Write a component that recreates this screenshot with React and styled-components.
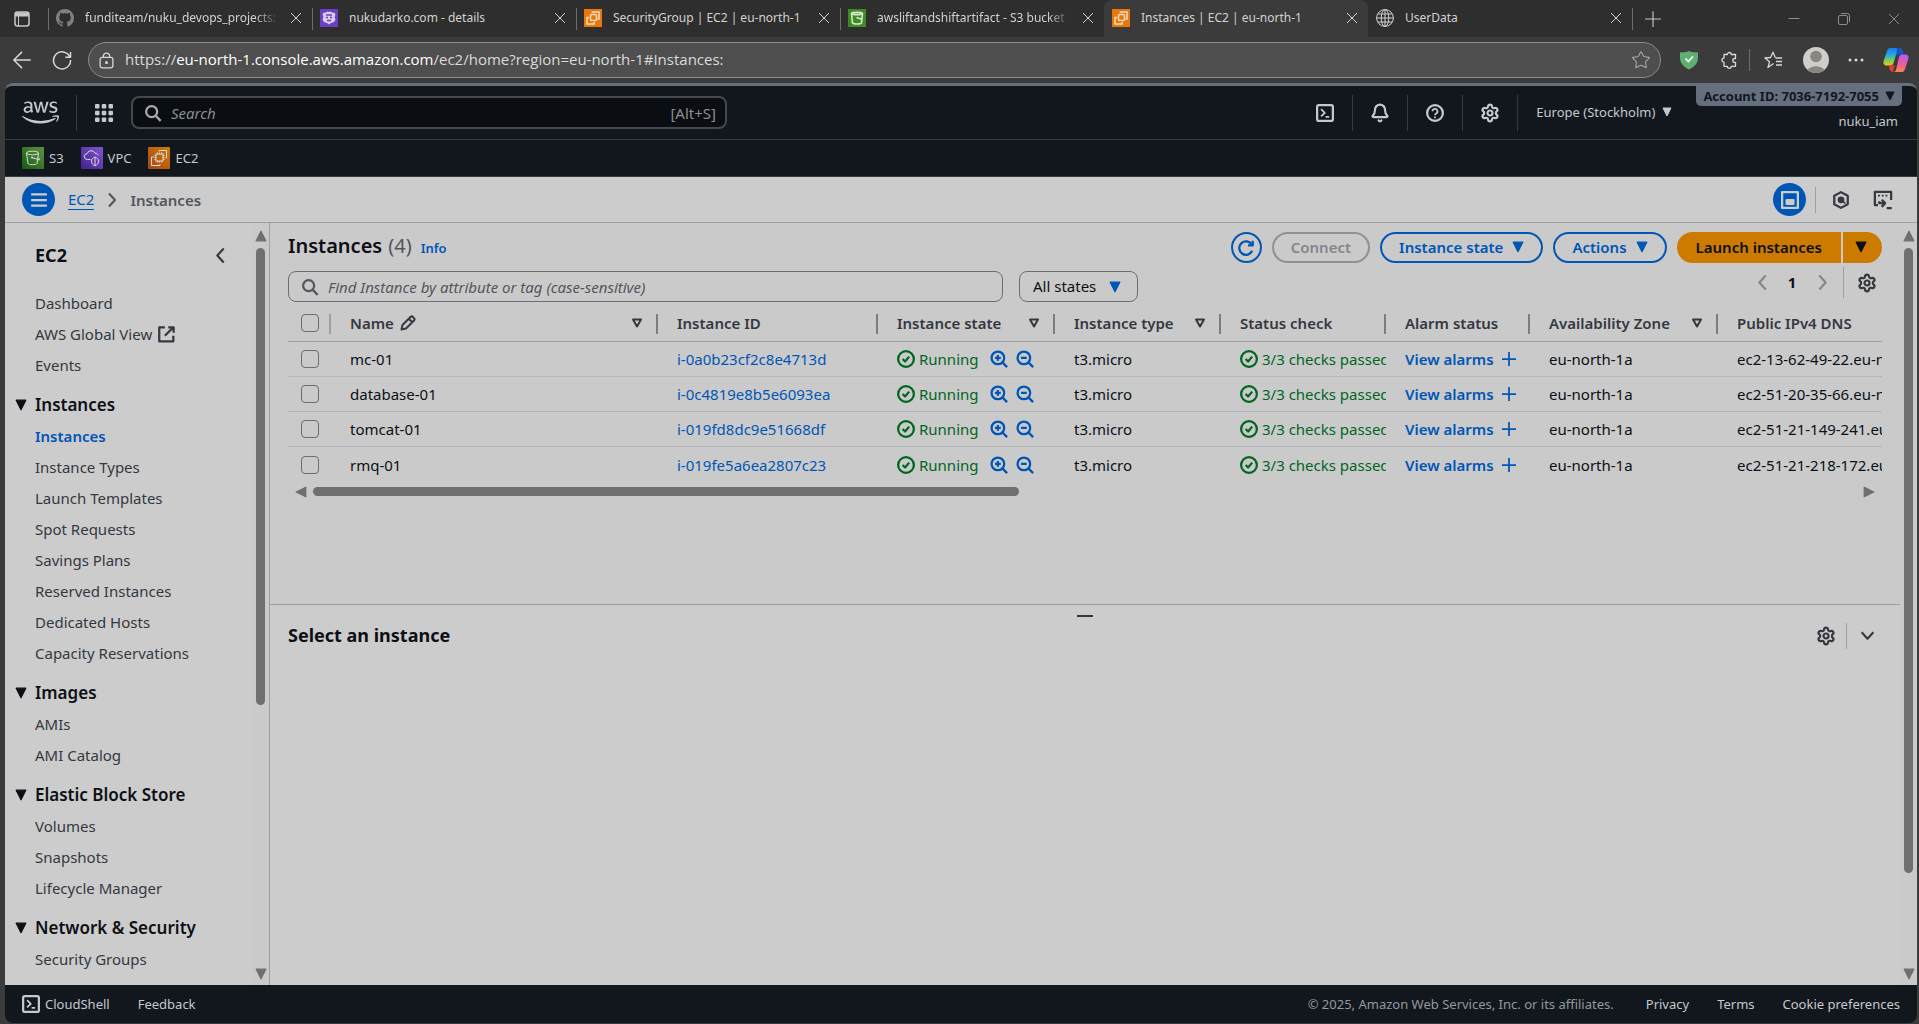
import React from "react";
import styled, { createGlobalStyle, css } from "styled-components";
import { FaAws } from "react-icons/fa";
import { Settings, Bell, Star } from "lucide-react";

const c = {
  strip: "#2e2e2e",
  toolbar: "#3b3b3b",
  header: "#12171e",
  headerLine: "#333a44",
  account: "#656f7d",
  headerText: "#c6c8cb",
  page: "#cccccc",
  main: "#cacaca",
  line: "#9e9ea4",
  rowLine: "#b6b6bc",
  text: "#0c1015",
  soft: "#353840",
  muted: "#53565e",
  blue: "#0056b5",
  green: "#00661f",
  orange: "#cc7a00",
  scroll: "#6f6f6f",
  disabled: "#85858b",
};

const GlobalStyle = createGlobalStyle`
  *, *::before, *::after { box-sizing: border-box; }
  body { margin: 0; background: ${c.toolbar}; }
  button, input, select { font: inherit; color: inherit; margin: 0; }
  button { padding: 0; border: 0; background: none; cursor: pointer; }
  a { color: inherit; text-decoration: none; }
  h1, h2, p { margin: 0; padding: 0; }
  svg { display: block; flex: none; }
`;

const Window = styled.div`
  display: flex;
  flex-direction: column;
  height: 100vh;
  overflow: hidden;
  font: 400 15px/20px "Noto Sans", "Open Sans", sans-serif;
  color: ${c.text};
`;

/* ---------- icons ---------- */

const Line = ({ size = 18, box = 16, width = 2, children }) => (
  <svg
    width={size}
    height={size}
    viewBox={`0 0 ${box} ${box}`}
    fill="none"
    stroke="currentColor"
    strokeWidth={width}
    strokeLinejoin="round"
    aria-hidden="true"
  >
    {children}
  </svg>
);

const SearchIcon = () => (
  <Line>
    <circle cx="6.8" cy="6.8" r="4.9" />
    <path d="m10.4 10.4 4.4 4.6" />
  </Line>
);
const CheckCircle = () => (
  <Line>
    <circle cx="8" cy="8" r="7" />
    <path d="m5 8 2.2 2.2 3.6-4.3" />
  </Line>
);
const ZoomIcon = ({ plus }) => (
  <Line>
    <circle cx="7" cy="7" r="5.6" />
    <path d="m11 11 4.2 4.2M4.4 7h5.2" />
    {plus && <path d="M7 4.4v5.2" />}
  </Line>
);
const Chevron = ({ dir = "right", size = 17, width = 2 }) => (
  <Line size={size} width={width}>
    <path
      d={
        { right: "m5 1.5 6 6.5-6 6.5", left: "M11 1.5 5 8l6 6.5", down: "m2.5 5 5.5 6 5.5-6" }[dir]
      }
    />
  </Line>
);
const Caret = ({ size = 12, outline, dir = "down" }) => (
  <svg width={size} height={size} viewBox="0 0 12 12" aria-hidden="true">
    <g transform={`rotate(${{ down: 0, up: 180, left: 90, right: 270 }[dir]} 6 6)`}>
      <path
        d={outline ? "M2 2.500h8L6 9.500z" : "M1.200 1.200h9.600L6 10.800z"}
        fill={outline ? "none" : "currentColor"}
        stroke="currentColor"
        strokeWidth={outline ? 2 : 1.2}
        strokeLinejoin="round"
      />
    </g>
  </svg>
);
const CloseIcon = () => (
  <Line size={12} box={12} width={1}>
    <path d="m1 1 10 10M11 1 1 11" />
  </Line>
);
const ShellIcon = () => (
  <Line>
    <rect x="1" y="1" width="14" height="14" rx="1.5" />
    <path d="m4.5 4.5 3.3 3.3-3.3 3.3M8.5 11.5h3.2" strokeWidth="1.6" />
  </Line>
);
const GearIcon = () => <Settings size={20} strokeWidth={2.6} aria-hidden="true" />;

const Service = ({ kind }) => {
  const [from, to] = {
    s3: ["#17590f", "#5a9440"],
    vpc: ["#40208c", "#8156d0"],
    ec2: ["#a84512", "#d07c08"],
  }[kind];
  return (
    <svg width="22" height="22" viewBox="0 0 22 22" aria-hidden="true">
      <defs>
        <linearGradient id={kind} x1="0" y1="1" x2="1" y2="0">
          <stop offset="0" stopColor={from} />
          <stop offset="1" stopColor={to} />
        </linearGradient>
      </defs>
      <rect width="22" height="22" rx="1" fill={`url(#${kind})`} />
      <g fill="none" stroke="#dcdcdc" strokeWidth="1">
        {kind === "s3" && (
          <>
            <ellipse cx="10.5" cy="6" rx="6" ry="1.8" />
            <path d="M4.5 6 6 16.5c.5 1.6 8.5 1.6 9 0L16.5 6M10 10.5l7 2.3c1.2.2 1-1 .2-1.5l-1-.8" />
            <circle cx="10" cy="10.5" r=".7" />
          </>
        )}
        {kind === "vpc" && (
          <path d="M9.5 12.500H6.500a3 3 0 0 1-.3-6A4.200 4.200 0 0 1 14 6.300a2.400 2.400 0 0 1 3 2.200M14 10c-2 1.200-3.500 1.500-3.500 4s1.500 4 3.500 4.800c2-.8 3.500-2.300 3.500-4.800s-1.500-2.800-3.500-4zM14 10v8.800" />
        )}
        {kind === "ec2" && (
          <>
            <rect x="8" y="7" width="7" height="7" />
            <path d="M11 4.500V3.500h7.500V11h-1M6 10H3.500v8.500H12V17M9.500 5.500V7m2-1.500V7m2-1.500V7M9.500 14v1.500m2-1.500v1.500m2-1.500v1.500M6.500 8.500H8m-1.500 2H8m-1.500 2H8m7-4h1.500m-1.500 2h1.500m-1.500 2h1.500" />
          </>
        )}
      </g>
    </svg>
  );
};

const tabIcons = {
  github: (
    <svg width="18" height="18" viewBox="0 0 16 16" fill="#808080" aria-hidden="true">
      <path d="M8 0C3.58 0 0 3.58 0 8c0 3.54 2.29 6.53 5.47 7.59.4.07.55-.17.55-.38 0-.19-.01-.82-.01-1.49-2.01.37-2.53-.49-2.69-.94-.09-.23-.48-.94-.82-1.13-.28-.15-.68-.52-.01-.53.63-.01 1.08.58 1.23.82.72 1.21 1.87.87 2.33.66.07-.52.28-.87.51-1.07-1.78-.2-3.64-.89-3.64-3.95 0-.87.31-1.59.82-2.15-.08-.2-.36-1.02.08-2.12 0 0 .67-.21 2.2.82.64-.18 1.32-.27 2-.27s1.36.09 2 .27c1.53-1.04 2.2-.82 2.2-.82.44 1.1.16 1.92.08 2.12.51.56.82 1.27.82 2.15 0 3.07-1.87 3.75-3.65 3.95.29.25.54.73.54 1.48 0 1.07-.01 1.93-.01 2.2 0 .21.15.46.55.38A8.01 8.01 0 0 0 16 8c0-4.42-3.58-8-8-8z" />
    </svg>
  ),
  route: (
    <svg width="18" height="18" viewBox="0 0 18 18" aria-hidden="true">
      <rect width="18" height="18" fill="#6a3fc4" />
      <path
        d="M3.5 3.500q2.200 1 3.300-.8h4.400q1.100 1.800 3.300.8l1 2.500q-1.500 1.500 0 4.500-.8 3-4.500 3.500L9 15.500l-2-1.500q-3.700-.5-4.500-3.500 1.500-3 0-4.500z"
        fill="#d9cdf2"
      />
      <path d="M6 6h6M6 8.500h2m2 0h2M7 11.500h4" stroke="#6a3fc4" strokeWidth="1.4" />
    </svg>
  ),
  ec2: (
    <svg width="18" height="18" viewBox="0 0 18 18" aria-hidden="true">
      <rect width="18" height="18" fill="#e8770c" />
      <g fill="none" stroke="#f4dcc4" strokeWidth="1.5">
        <rect x="6.500" y="5.500" width="6" height="6" rx="1" />
        <path d="M8.500 4V3H15v7h-1.500M5 8.500H3V15h7v-2" />
      </g>
    </svg>
  ),
  s3: (
    <svg width="18" height="18" viewBox="0 0 18 18" aria-hidden="true">
      <rect width="18" height="18" fill="#3f8a22" />
      <g fill="none" stroke="#d6e8ce" strokeWidth="1.6">
        <path d="M3.500 4.500c1-1.500 10-1.500 11 0L13.500 14c-1 1.300-8 1.300-9 0zM3.500 4.500c1 1.500 10 1.500 11 0M8.500 8.500l6 2" />
      </g>
    </svg>
  ),
  globe: (
    <Line box={18} width={1}>
      <circle cx="9" cy="9" r="8.4" />
      <ellipse cx="9" cy="9" rx="3.8" ry="8.4" />
      <path d="M9 .6v16.8M.6 9h16.8M1.800 5h14.400M1.800 13h14.400" />
    </Line>
  ),
};

/* ---------- browser chrome ---------- */

const TabStrip = styled.div`
  display: flex;
  align-items: stretch;
  flex: none;
  height: 37px;
  background: ${c.strip};
  color: #d2d2d2;
  font-size: 12px;
`;
const StripButton = styled.button`
  display: grid;
  place-items: center;
  flex: none;
  width: ${(p) => p.$w}px;
  color: ${(p) => (p.$dim ? "#8e8e8e" : "#c8c8c8")};
`;
const Tab = styled.div`
  display: flex;
  align-items: center;
  flex: 0 1 264px;
  min-width: 0;
  gap: 11px;
  padding: 0 10px 2px 8px;
  position: relative;
  ${(p) =>
    p.$active
      ? css`
          background: ${c.toolbar};
          border-radius: 8px 8px 0 0;
        `
      : css`
          &::before {
            content: "";
            position: absolute;
            left: 0;
            top: 8px;
            bottom: 7px;
            width: 1px;
            background: ${p.$plain ? "transparent" : "#6c6c6c"};
          }
        `}
`;
const TabTitle = styled.span`
  flex: 1;
  min-width: 0;
  overflow: hidden;
  white-space: nowrap;
  mask-image: ${(p) => (p.$fade ? "linear-gradient(90deg, #000 88%, transparent)" : "none")};
`;
const StripRule = styled.span`
  align-self: center;
  width: 1px;
  height: 22px;
  background: #6c6c6c;
`;
const Spacer = styled.div`
  flex: 1;
`;

const Toolbar = styled.div`
  display: flex;
  align-items: center;
  flex: none;
  height: 46px;
  padding: 0 3px 0 2px;
  background: ${c.toolbar};
  color: #d8d8d8;
`;
const ToolButton = styled.button`
  display: grid;
  place-items: center;
  flex: none;
  width: ${(p) => p.$w || 40}px;
  height: 36px;
`;
const AddressBar = styled.div`
  display: flex;
  align-items: center;
  flex: 1;
  height: 36px;
  margin: 0 8px 0 6px;
  padding: 0 9px;
  gap: 10px;
  border: 1px solid #8c8c8c;
  border-radius: 18px;
  background: #4e4e4e;
  font: 15px/20px "Open Sans", "Noto Sans", sans-serif;
`;
const Address = styled.div`
  flex: 1;
  min-width: 0;
  overflow: hidden;
  padding-bottom: 2px;
  white-space: nowrap;
  color: #dadada;
  strong {
    font-weight: 400;
    color: #ffffff;
  }
`;

/* ---------- console header ---------- */

const Page = styled.div`
  display: flex;
  flex-direction: column;
  flex: 1;
  min-height: 0;
  margin: 0 2px 1px 5px;
  border-top: 3px solid ${c.account};
  border-radius: 8px;
  overflow: hidden;
  background: ${c.header};
`;
const Header = styled.header`
  display: flex;
  align-items: center;
  flex: none;
  height: 54px;
  padding-left: 17px;
  border-bottom: 1px solid ${c.headerLine};
  color: ${c.headerText};
`;
const Logo = styled.a`
  margin-right: 17px;
`;
const HeaderButton = styled.button`
  display: grid;
  place-items: center;
  flex: none;
  width: 54px;
  height: 36px;
  color: ${c.headerText};
`;
const HeaderRule = styled.span`
  flex: none;
  width: 1px;
  height: 36px;
  background: ${c.headerLine};
`;
const SearchBox = styled.label`
  display: flex;
  align-items: center;
  flex: 0 1 596px;
  height: 33px;
  padding: 0 9px 0 11px;
  gap: 9px;
  border: 2px solid #45494f;
  border-radius: 8px;
  background: #0a0d12;
  color: #a9abae;
  input {
    flex: 1;
    min-width: 0;
    padding: 0;
    border: 0;
    outline: 0;
    background: none;
  }
  input::placeholder {
    color: #8b8e93;
    font-style: italic;
    opacity: 1;
  }
  kbd {
    font: inherit;
    color: #8b8e93;
  }
`;
const RegionButton = styled.button`
  display: flex;
  align-items: center;
  gap: 7px;
  margin: 0 24px 0 18px;
  padding-bottom: 2px;
  font-size: 13px;
  white-space: nowrap;
`;
const Account = styled.div`
  display: flex;
  flex-direction: column;
  align-items: flex-end;
  align-self: flex-start;
  padding-right: 15px;
  font-size: 13px;
`;
const AccountButton = styled.button`
  display: flex;
  align-items: center;
  height: 20px;
  padding: 0 7px;
  gap: 6px;
  border-radius: 0 0 5px 5px;
  background: ${c.account};
  color: ${c.header};
  font-weight: 700;
  white-space: nowrap;
`;
const UserName = styled.span`
  margin: 5px 4px 0 0;
`;
const Favorites = styled.nav`
  display: flex;
  align-items: center;
  flex: none;
  height: 37px;
  padding-left: 17px;
  gap: 17px;
  border-bottom: 1px solid ${c.headerLine};
  color: ${c.headerText};
  font-size: 13px;
  a {
    display: flex;
    align-items: center;
    gap: 5px;
  }
`;

/* ---------- breadcrumbs ---------- */

const CrumbBar = styled.div`
  display: flex;
  align-items: center;
  flex: none;
  height: 46px;
  padding: 0 19px 0 17px;
  border-bottom: 1px solid ${c.line};
  background: ${c.page};
`;
const RoundButton = styled.button`
  display: grid;
  place-items: center;
  width: 33px;
  height: 33px;
  border-radius: 50%;
  background: ${c.blue};
  color: ${c.page};
`;
const Crumbs = styled.nav`
  display: flex;
  align-items: center;
  flex: 1;
  gap: 10px;
  margin-left: 13px;
  color: ${c.muted};
  font-weight: 600;
  a {
    border-bottom: 1px solid ${c.blue};
    color: ${c.blue};
    font-weight: 400;
  }
`;
const CrumbTools = styled.div`
  display: flex;
  align-items: center;
  gap: 12px;
`;
const Rule = styled.span`
  flex: none;
  width: 1px;
  height: ${(p) => p.$h}px;
  margin: ${(p) => p.$m || "0"};
  background: ${c.line};
`;
const IconButton = styled.button`
  display: grid;
  place-items: center;
  flex: none;
  width: 30px;
  height: 31px;
  color: ${(p) => (p.$dim ? c.disabled : c.soft)};
`;

/* ---------- body ---------- */

const Body = styled.div`
  display: flex;
  flex: 1;
  min-height: 0;
`;
const Sidebar = styled.aside`
  display: flex;
  flex: 0 0 265px;
  border-right: 1px solid ${c.line};
  background: ${c.page};
`;
const SideContent = styled.div`
  flex: 1;
  min-width: 0;
  overflow: hidden;
  padding: 16px 23px 0 10px;
`;
const SideTitle = styled.div`
  display: flex;
  align-items: center;
  justify-content: space-between;
  height: 32px;
  margin-bottom: 16px;
  padding-left: 20px;
  color: ${c.soft};
  h2 {
    color: ${c.text};
    font-size: 18px;
    font-weight: 700;
  }
`;
const SideLink = styled.a`
  display: flex;
  align-items: center;
  gap: 5px;
  height: 31px;
  padding-left: 20px;
  color: ${(p) => (p.$current ? c.blue : c.soft)};
  font-weight: ${(p) => (p.$current ? 600 : 400)};
`;
const SideGroup = styled.button`
  display: flex;
  align-items: center;
  gap: 8px;
  width: 100%;
  height: 31px;
  margin-top: 9px;
  font-size: 17px;
  font-weight: 600;
`;

const ScrollTrack = styled.div`
  display: flex;
  align-items: center;
  flex: none;
  gap: 6px;
  color: ${c.scroll};
  ${(p) =>
    p.$horizontal
      ? "height: 19px; padding: 0 7px;"
      : "flex-direction: column; width: 17px; padding: 7px 0 5px; background: #cacaca;"}
`;
const ScrollLane = styled.div`
  display: flex;
  flex: 1;
  align-self: stretch;
  align-items: center;
  flex-direction: ${(p) => (p.$horizontal ? "row" : "column")};
  &::before {
    content: "";
    flex: 0 0 ${(p) => p.$size}%;
    ${(p) => (p.$horizontal ? "height: 9px;" : "width: 9px;")}
    border-radius: 5px;
    background: ${c.scroll};
  }
`;
const ScrollBar = ({ horizontal, size }) => (
  <ScrollTrack $horizontal={horizontal} aria-hidden="true">
    <Caret size={12} dir={horizontal ? "left" : "up"} />
    <ScrollLane $horizontal={horizontal} $size={size} />
    <Caret size={12} dir={horizontal ? "right" : "down"} />
  </ScrollTrack>
);

const Split = styled.main`
  display: grid;
  grid-template-rows: 1fr 1fr;
  flex: 1;
  min-width: 0;
`;
const ListPane = styled.section`
  min-width: 0;
  min-height: 0;
  padding: 9px 18px 0;
  background: ${c.main};
`;
const TitleRow = styled.div`
  display: flex;
  align-items: center;
  gap: 10px;
  height: 31px;
`;
const Title = styled.h1`
  flex: 1;
  padding-bottom: 2px;
  font-size: 20px;
  font-weight: 600;
  white-space: nowrap;
  span {
    margin: 0 9px 0 6px;
    color: ${c.muted};
    font-weight: 400;
  }
  a {
    color: ${c.blue};
    font-size: 13px;
    font-weight: 600;
  }
`;
const Pill = styled.button`
  display: flex;
  align-items: center;
  justify-content: center;
  gap: 9px;
  height: 31px;
  padding: 0 17px 2px;
  border: 2px solid ${c.blue};
  border-radius: 16px;
  color: ${c.blue};
  font-weight: 600;
  white-space: nowrap;
  &:disabled {
    border-color: #909096;
    color: ${c.disabled};
  }
  ${(p) => p.$round && "width: 31px; padding: 0;"}
`;
const Launch = styled.div`
  display: flex;
  gap: 2px;
`;
const LaunchButton = styled.button`
  display: grid;
  place-items: center;
  height: 31px;
  padding: ${(p) => (p.$menu ? "0 15px 2px 12px" : "0 19px 2px")};
  border-radius: ${(p) => (p.$menu ? "0 16px 16px 0" : "16px 0 0 16px")};
  background: ${c.orange};
  font-weight: 600;
  white-space: nowrap;
`;
const FilterRow = styled.div`
  display: flex;
  align-items: flex-end;
  gap: 16px;
  height: 35px;
  margin: 4px 0 3px;
`;
const FindBox = styled.label`
  display: flex;
  align-items: center;
  flex: 0 1 715px;
  height: 31px;
  padding: 0 12px;
  gap: 9px;
  border: 1px solid #6c6c74;
  border-radius: 8px;
  color: ${c.muted};
  input {
    flex: 1;
    min-width: 0;
    padding: 0;
    border: 0;
    outline: 0;
    background: none;
  }
  input::placeholder {
    color: ${c.muted};
    font-style: italic;
    opacity: 1;
  }
`;
const SelectWrap = styled.label`
  position: relative;
  flex: none;
  color: ${c.blue};
  select {
    display: block;
    width: 119px;
    height: 31px;
    padding: 0 30px 1px 13px;
    border: 1px solid #6c6c74;
    border-radius: 8px;
    appearance: none;
    background: none;
    color: ${c.text};
  }
  svg {
    position: absolute;
    right: 17px;
    top: 10px;
    pointer-events: none;
  }
`;
const Pager = styled.nav`
  display: flex;
  align-items: center;
  align-self: flex-start;
  margin-left: auto;
  button[aria-current] {
    padding-bottom: 2px;
    color: ${c.text};
    font-weight: 700;
  }
`;

const Table = styled.table`
  width: 100%;
  table-layout: fixed;
  border-collapse: separate;
  border-spacing: 0;
  th,
  td {
    padding: 0 0 0 19px;
    overflow: hidden;
    text-align: left;
    white-space: nowrap;
    vertical-align: middle;
  }
  th {
    position: relative;
    height: 37px;
    border-bottom: 1px solid ${c.line};
    color: ${c.soft};
    font-weight: 600;
  }
  th:not(:last-child)::after {
    content: "";
    position: absolute;
    right: 0;
    top: 9px;
    width: 2px;
    height: 20px;
    background: #7b7b82;
  }
  th:first-child::after {
    background: ${c.line};
  }
  td {
    height: 35px;
    border-bottom: 1px solid ${c.rowLine};
  }
  tr:last-child td {
    border-bottom: 0;
  }
  th:first-child,
  td:first-child {
    padding-left: 13px;
  }
`;
const HeadCell = styled.div`
  display: flex;
  align-items: center;
  gap: 6px;
  padding-right: 15px;
`;
const SortButton = styled.button`
  margin-left: auto;
`;
const Check = styled.input`
  display: block;
  appearance: none;
  width: 18px;
  height: 18px;
  border: 1px solid #6c6c74;
  border-radius: 4px;
`;
const Status = styled.span`
  display: flex;
  align-items: center;
  gap: 4px;
  color: ${c.green};
`;
const StateCell = styled.div`
  display: flex;
  align-items: center;
  justify-content: space-between;
  padding-right: 21px;
  color: ${c.blue};
`;
const Inline = styled.div`
  display: flex;
  align-items: center;
  gap: 8px;
  color: ${c.blue};
`;
const TextLink = styled.a`
  color: ${c.blue};
  font-weight: ${(p) => (p.$strong ? 600 : 400)};
`;

const Drawer = styled.section`
  min-height: 0;
  border-top: 1px solid ${c.line};
  background: ${c.page};
`;
const Grip = styled.button`
  display: block;
  width: 16px;
  height: 2px;
  margin: 10px auto 5px;
  background: ${c.soft};
`;
const DrawerHead = styled.div`
  display: flex;
  align-items: center;
  height: 27px;
  padding: 0 18px;
  h2 {
    flex: 1;
    padding-bottom: 1px;
    font-size: 18px;
    font-weight: 700;
  }
`;

const Footer = styled.footer`
  display: flex;
  align-items: center;
  flex: none;
  height: 38px;
  padding: 0 17px;
  gap: 28px;
  color: ${c.headerText};
  font-size: 13px;
  white-space: nowrap;
  p {
    margin-left: auto;
    padding-right: 4px;
    color: #94979c;
  }
`;
const FooterButton = styled.button`
  display: flex;
  align-items: center;
  gap: 5px;
`;

/* ---------- data ---------- */

const tabs = [
  { icon: "github", title: "funditeam/nuku_devops_projects:", fade: true },
  { icon: "route", title: "nukudarko.com - details" },
  { icon: "ec2", title: "SecurityGroup | EC2 | eu-north-1" },
  { icon: "s3", title: "awsliftandshiftartifact - S3 bucket", fade: true },
  { icon: "ec2", title: "Instances | EC2 | eu-north-1", active: true },
  { icon: "globe", title: "UserData", plain: true },
];

const groups = [
  {
    title: "Instances",
    links: [
      "Instances",
      "Instance Types",
      "Launch Templates",
      "Spot Requests",
      "Savings Plans",
      "Reserved Instances",
      "Dedicated Hosts",
      "Capacity Reservations",
    ],
  },
  { title: "Images", links: ["AMIs", "AMI Catalog"] },
  { title: "Elastic Block Store", links: ["Volumes", "Snapshots", "Lifecycle Manager"] },
  { title: "Network & Security", links: ["Security Groups"] },
];

const columns = [
  { label: "Name", width: 327, sort: true, edit: true },
  { label: "Instance ID", width: 220 },
  { label: "Instance state", width: 177, sort: true },
  { label: "Instance type", width: 166, sort: true },
  { label: "Status check", width: 165 },
  { label: "Alarm status", width: 144 },
  { label: "Availability Zone", width: 188, sort: true },
  { label: "Public IPv4 DNS" },
];

const instances = [
  { name: "mc-01", id: "i-0a0b23cf2c8e4713d", dns: "ec2-13-62-49-22.eu-north-1" },
  { name: "database-01", id: "i-0c4819e8b5e6093ea", dns: "ec2-51-20-35-66.eu-north-1" },
  { name: "tomcat-01", id: "i-019fd8dc9e51668df", dns: "ec2-51-21-149-241.eu-north-1" },
  { name: "rmq-01", id: "i-019fe5a6ea2807c23", dns: "ec2-51-21-218-172.eu-north-1" },
];

/* ---------- sections ---------- */

const Browser = () => (
  <>
    <TabStrip>
      <StripButton $w={44} aria-label="Tab actions">
        <Line size={16} width={1.5}>
          <rect x="1" y="1" width="14" height="14" rx="2.5" />
          <path d="M1 3.500h14" strokeWidth="4" />
          <path d="M4.500 4v11" strokeWidth="1" />
        </Line>
      </StripButton>
      <Spaced />
      {tabs.map((t) => (
        <Tab key={t.title} $active={t.active} $plain={t.plain}>
          {tabIcons[t.icon]}
          <TabTitle $fade={t.fade}>{t.title}</TabTitle>
          <button aria-label={`Close ${t.title}`}>
            <CloseIcon />
          </button>
        </Tab>
      ))}
      <StripRule />
      <StripButton $w={40} aria-label="New tab">
        <Line box={16} width={1}>
          <path d="M8 1v14M1 8h14" />
        </Line>
      </StripButton>
      <Spacer />
      <StripButton $w={50} $dim aria-label="Minimize">
        <Line size={12} box={12} width={1}>
          <path d="M.5 5.500h11" />
        </Line>
      </StripButton>
      <StripButton $w={50} $dim aria-label="Restore">
        <Line size={12} box={12} width={1}>
          <rect x=".5" y="2.500" width="9" height="9" rx="1.5" />
          <path d="M3 .5h6.500a2 2 0 0 1 2 2V9" />
        </Line>
      </StripButton>
      <StripButton $w={50} $dim aria-label="Close window">
        <CloseIcon />
      </StripButton>
    </TabStrip>
    <Toolbar>
      <ToolButton aria-label="Back">
        <Line size={20} width={1.2}>
          <path d="M15 8H1.500M8 1.500 1.500 8 8 14.500" />
        </Line>
      </ToolButton>
      <ToolButton aria-label="Reload">
        <Line size={20} width={1.2}>
          <path d="M14.200 5.500A6.800 6.800 0 1 0 14.800 8M14.800 1.500v4.200h-4.200" />
        </Line>
      </ToolButton>
      <AddressBar>
        <Line size={17} width={1.2}>
          <rect x="2" y="5" width="12" height="10" rx="2" />
          <path d="M5 5V4a3 3 0 0 1 6 0v1" />
          <circle cx="8" cy="10" r=".8" fill="currentColor" />
        </Line>
        <Address>
          https://<strong>eu-north-1.console.aws.amazon.com</strong>
          /ec2/home?region=eu-north-1#Instances:
        </Address>
        <button aria-label="Add to favorites">
          <Star size={20} strokeWidth={1.3} color="#a8a8a8" />
        </button>
      </AddressBar>
      <ToolButton aria-label="Ad blocker">
        <svg width="18" height="20" viewBox="0 0 18 20" aria-hidden="true">
          <path
            d="M9 1c3 1.500 6 1.500 9 1.300V8c0 5-3.500 9-9 11.500C3.500 17 0 13 0 8V2.300C3 2.500 6 2.500 9 1z"
            fill="#5fae72"
          />
          <path d="m5.500 8.500 2.800 3L13 6.500" fill="none" stroke="#fff" strokeWidth="1.8" />
        </svg>
      </ToolButton>
      <ToolButton aria-label="Extensions">
        <Line size={18} box={18} width={1.3}>
          <path d="M5.500 3.500h1.800a2 2 0 1 1 4 0h4.200v4h-.8a1.900 1.900 0 0 0 0 3.800h.8v4h-4.200a2 2 0 1 1-4 0H4v-4.100a2 2 0 1 1 0-4V3.500z" />
        </Line>
      </ToolButton>
      <StripRule />
      <ToolButton $w={46} aria-label="Favorites">
        <Line size={18} box={18} width={1.3}>
          <path d="M9.500 12.500 4 16.500l1.500-5.700L1 7l5.500-.5L9 1.200l2.300 5.300M11.500 7H18M12 10.500h6M12 14h6" />
        </Line>
      </ToolButton>
      <ToolButton aria-label="Profile">
        <svg width="26" height="26" viewBox="0 0 26 26" aria-hidden="true">
          <circle cx="13" cy="13" r="13" fill="#d0cecb" />
          <circle cx="13" cy="9.500" r="5.8" fill="#8a8783" />
          <path d="M4.500 22.800a10 7.500 0 0 1 17 0A13 13 0 0 1 13 26a13 13 0 0 1-8.500-3.200z" fill="#8a8783" />
        </svg>
      </ToolButton>
      <ToolButton aria-label="More">
        <svg width="16" height="4" viewBox="0 0 16 4" fill="currentColor" aria-hidden="true">
          <circle cx="2" cy="2" r="1.5" />
          <circle cx="8" cy="2" r="1.5" />
          <circle cx="14" cy="2" r="1.5" />
        </svg>
      </ToolButton>
      <ToolButton aria-label="Copilot">
        <svg width="26" height="24" viewBox="0 0 26 24" aria-hidden="true">
          <defs>
            <linearGradient id="ribbonCool" x1="0" y1="0" x2="0" y2="1">
              <stop offset="0" stopColor="#1b7be8" />
              <stop offset=".4" stopColor="#25a8e0" />
              <stop offset=".75" stopColor="#8ccf4a" />
              <stop offset="1" stopColor="#f0c020" />
            </linearGradient>
            <linearGradient id="ribbonWarm" x1="0.6" y1="0" x2="0.3" y2="1">
              <stop offset="0" stopColor="#b45cf0" />
              <stop offset=".5" stopColor="#f05c9c" />
              <stop offset="1" stopColor="#fa8a48" />
            </linearGradient>
          </defs>
          <path
            d="M7 0h9c2 0 3 1.500 3.500 3l.8 2.500H16c-2 0-3 1-3.500 3L10.500 15c-.5 1.500-1.500 2.500-3 2.500H3.500C.5 17.500 0 15 .8 12.500L4 3c.6-2 1.500-3 3-3z"
            fill="url(#ribbonCool)"
          />
          <path d="M14 0h2c2 0 3 1.500 3.500 3l1 3.500H16c-1 0-2 .3-2.700 1z" fill="#1453c8" />
          <path d="M10 24c-2 0-3-1.500-3.500-3l-.8-3.500H9c1.500 0 2.500-.500 3-1.500z" fill="#e0402c" />
          <path
            d="M19 24h-9c2 0 2.800-1 3.300-3L16 9c.5-1.500 1.500-2.500 3-2.500h3.500c3 0 3.500 2.500 2.700 5L22 21c-.6 2-1.500 3-3 3z"
            fill="url(#ribbonWarm)"
          />
        </svg>
      </ToolButton>
    </Toolbar>
  </>
);

const Spaced = styled.span`
  flex: 0 0 4px;
`;

const ConsoleHeader = () => (
  <>
    <Header>
      <Logo href="#home" aria-label="AWS">
        <FaAws size={37} />
      </Logo>
      <HeaderRule />
      <HeaderButton aria-label="Services">
        <svg width="18" height="18" viewBox="0 0 18 18" fill="currentColor" aria-hidden="true">
          {[0, 6.75, 13.5].map((y) =>
            [0, 6.75, 13.5].map((x) => (
              <rect key={`${x}-${y}`} x={x} y={y} width="4.5" height="4.5" rx="1" />
            ))
          )}
        </svg>
      </HeaderButton>
      <SearchBox>
        <SearchIcon />
        <input type="search" placeholder="Search" aria-label="Search services" />
        <kbd>[Alt+S]</kbd>
      </SearchBox>
      <Spacer />
      <HeaderButton aria-label="CloudShell">
        <ShellIcon />
      </HeaderButton>
      <HeaderRule />
      <HeaderButton aria-label="Notifications">
        <Bell size={20} strokeWidth={2.6} />
      </HeaderButton>
      <HeaderRule />
      <HeaderButton aria-label="Help">
        <Line>
          <circle cx="8" cy="8" r="7" />
          <path
            d="M5.800 6.500a2.200 2.200 0 1 1 3.300 1.900c-.8.500-1.100.8-1.100 1.600M8 11v1.600"
            strokeWidth="1.6"
          />
        </Line>
      </HeaderButton>
      <HeaderRule />
      <HeaderButton aria-label="Settings">
        <GearIcon />
      </HeaderButton>
      <HeaderRule />
      <RegionButton>
        Europe (Stockholm)
        <Caret size={10} />
      </RegionButton>
      <Account>
        <AccountButton>
          Account ID: 7036-7192-7055
          <Caret size={10} />
        </AccountButton>
        <UserName>nuku_iam</UserName>
      </Account>
    </Header>
    <Favorites aria-label="Favorites">
      <a href="#s3">
        <Service kind="s3" />
        S3
      </a>
      <a href="#vpc">
        <Service kind="vpc" />
        VPC
      </a>
      <a href="#ec2">
        <Service kind="ec2" />
        EC2
      </a>
    </Favorites>
    <CrumbBar>
      <RoundButton aria-label="Toggle navigation">
        <Line>
          <path d="M1 3h14M1 8h14M1 13h14" />
        </Line>
      </RoundButton>
      <Crumbs aria-label="Breadcrumb">
        <a href="#ec2">EC2</a>
        <Chevron size={16} width={2.2} />
        <span>Instances</span>
      </Crumbs>
      <RoundButton aria-label="Split panel">
        <Line>
          <rect x="1" y="1" width="14" height="14" />
          <rect x="5" y="8" width="6" height="3.500" fill="currentColor" />
          <path d="M4 5.500h8" stroke="none" />
        </Line>
      </RoundButton>
      <Rule $h={26} $m="0 10px 0 9px" />
      <CrumbTools>
        <IconButton aria-label="Tools">
          <Line>
            <path d="M8 1 14 4.200v7.600L8 15l-6-3.200V4.200z" />
            <circle cx="8" cy="7.800" r="2" fill="currentColor" />
            <path d="m9 9 3 2" strokeWidth="1.5" />
          </Line>
        </IconButton>
        <IconButton aria-label="Console">
          <Line size={20} width={1.8}>
            <path d="M4 12H1.500V1.500h13V8" />
            <path d="M4 4.500h1.500m1.500 0h1.500m1.500 0h1.500" strokeWidth="1.4" />
            <path d="M5 9v1.500h4M7 7.800 9.700 10.500 7 13.500M11 14.500h4" />
          </Line>
        </IconButton>
      </CrumbTools>
    </CrumbBar>
  </>
);

const SideNav = () => (
  <Sidebar>
    <SideContent>
      <SideTitle>
        <h2>EC2</h2>
        <button aria-label="Close navigation">
          <Chevron dir="left" />
        </button>
      </SideTitle>
      <nav aria-label="EC2">
        <SideLink href="#dashboard">Dashboard</SideLink>
        <SideLink href="#global-view">
          AWS Global View
          <Line>
            <path d="M7 2H2v12.500h12.500V9.500M10 2h4.800v4.800M7 9.500 14.500 2" />
          </Line>
        </SideLink>
        <SideLink href="#events">Events</SideLink>
        {groups.map((g) => (
          <React.Fragment key={g.title}>
            <SideGroup aria-expanded="true">
              <Caret />
              {g.title}
            </SideGroup>
            {g.links.map((l) => (
              <SideLink key={l} href={`#${l}`} $current={l === "Instances"}>
                {l}
              </SideLink>
            ))}
          </React.Fragment>
        ))}
      </nav>
    </SideContent>
    <ScrollBar size={64} />
  </Sidebar>
);

const InstanceTable = () => (
  <Table>
    <colgroup>
      <col width="43" />
      {columns.map((col) => (
        <col key={col.label} width={col.width} />
      ))}
    </colgroup>
    <thead>
      <tr>
        <th>
          <Check type="checkbox" aria-label="Select all instances" />
        </th>
        {columns.map((col) => (
          <th key={col.label}>
            <HeadCell>
              {col.label}
              {col.edit && (
                <Line size={16}>
                  <path d="m1.500 14.500 1-4.500 8-8a1.700 1.700 0 0 1 2.400 0l1.100 1.100a1.700 1.700 0 0 1 0 2.400l-8 8zM9 4l3 3" />
                </Line>
              )}
              {col.sort && (
                <SortButton aria-label={`Sort by ${col.label}`}>
                  <Caret outline />
                </SortButton>
              )}
            </HeadCell>
          </th>
        ))}
      </tr>
    </thead>
    <tbody>
      {instances.map((i) => (
        <tr key={i.id}>
          <td>
            <Check type="checkbox" aria-label={`Select ${i.name}`} />
          </td>
          <td>{i.name}</td>
          <td>
            <TextLink href={`#${i.id}`}>{i.id}</TextLink>
          </td>
          <td>
            <StateCell>
              <Status>
                <CheckCircle />
                Running
              </Status>
              <Inline>
                <button aria-label="Filter in">
                  <ZoomIcon plus />
                </button>
                <button aria-label="Filter out">
                  <ZoomIcon />
                </button>
              </Inline>
            </StateCell>
          </td>
          <td>t3.micro</td>
          <td>
            <Status>
              <CheckCircle />
              3/3 checks passed
            </Status>
          </td>
          <td>
            <Inline>
              <TextLink $strong href="#alarms">
                View alarms
              </TextLink>
              <Line size={14}>
                <path d="M8 0v16M0 8h16" />
              </Line>
            </Inline>
          </td>
          <td>eu-north-1a</td>
          <td>{i.dns}</td>
        </tr>
      ))}
    </tbody>
  </Table>
);

const InstancesView = () => (
  <Split>
    <ListPane>
      <TitleRow>
        <Title>
          Instances<span>(4)</span>
          <a href="#info">Info</a>
        </Title>
        <Pill $round aria-label="Refresh">
          <Line>
            <path d="M13.500 10.500a6 6 0 1 1-.3-5.500M14 1.500v4.200H9.800" />
          </Line>
        </Pill>
        <Pill disabled>Connect</Pill>
        <Pill>
          Instance state
          <Caret />
        </Pill>
        <Pill>
          Actions
          <Caret />
        </Pill>
        <Launch>
          <LaunchButton>Launch instances</LaunchButton>
          <LaunchButton $menu aria-label="More launch options">
            <Caret />
          </LaunchButton>
        </Launch>
      </TitleRow>
      <FilterRow>
        <FindBox>
          <SearchIcon />
          <input
            type="text"
            placeholder="Find Instance by attribute or tag (case-sensitive)"
            aria-label="Find instance"
          />
        </FindBox>
        <SelectWrap>
          <select aria-label="Instance states">
            <option>All states</option>
          </select>
          <Caret />
        </SelectWrap>
        <Pager aria-label="Pagination">
          <IconButton $dim aria-label="Previous page">
            <Chevron dir="left" />
          </IconButton>
          <IconButton aria-current="page">1</IconButton>
          <IconButton $dim aria-label="Next page">
            <Chevron />
          </IconButton>
          <Rule $h={31} $m="0 8px 0 6px" />
          <IconButton aria-label="Preferences">
            <GearIcon />
          </IconButton>
        </Pager>
      </FilterRow>
      <InstanceTable />
      <ScrollBar horizontal size={45.7} />
    </ListPane>
    <Drawer>
      <Grip aria-label="Resize panel" />
      <DrawerHead>
        <h2>Select an instance</h2>
        <IconButton aria-label="Panel preferences">
          <GearIcon />
        </IconButton>
        <Rule $h={26} $m="0 5px" />
        <IconButton aria-label="Close panel">
          <Chevron dir="down" />
        </IconButton>
      </DrawerHead>
    </Drawer>
  </Split>
);

export default function App() {
  return (
    <Window>
      <GlobalStyle />
      <Browser />
      <Page>
        <ConsoleHeader />
        <Body>
          <SideNav />
          <InstancesView />
          <ScrollBar size={87.5} />
        </Body>
        <Footer>
          <FooterButton>
            <ShellIcon />
            CloudShell
          </FooterButton>
          <a href="#feedback">Feedback</a>
          <p>© 2025, Amazon Web Services, Inc. or its affiliates.</p>
          <a href="#privacy">Privacy</a>
          <a href="#terms">Terms</a>
          <a href="#cookies">Cookie preferences</a>
        </Footer>
      </Page>
    </Window>
  );
}
